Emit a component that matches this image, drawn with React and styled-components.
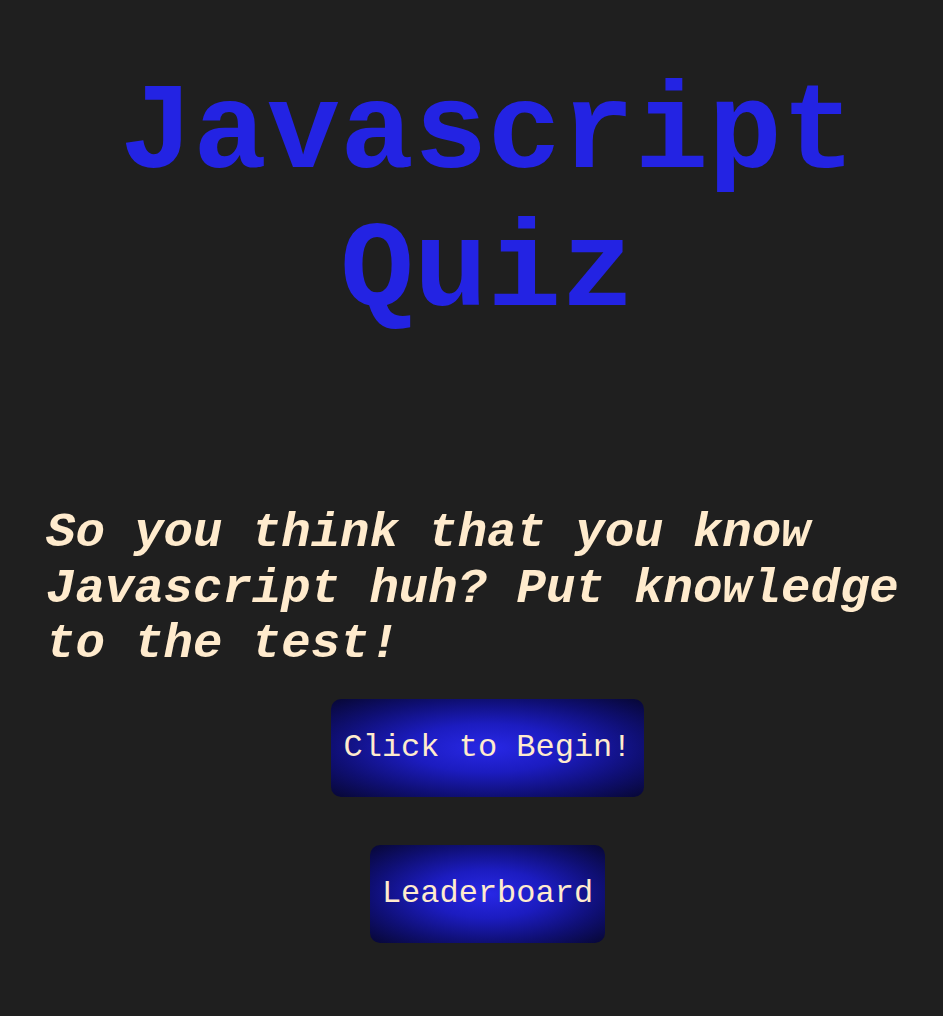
import React from "react";
import styled, { createGlobalStyle } from "styled-components";

const MONO = `"Courier New", "Nimbus Mono PS", "Nimbus Mono L", FreeMono, "Liberation Mono", monospace`;

const GlobalStyle = createGlobalStyle`
  html, body {
    margin: 0;
    padding: 0;
    background: #1f1f1f;
  }
  body {
    font-family: ${MONO};
  }
`;

const Page = styled.main`
  min-height: 1016px;
  box-sizing: border-box;
  padding: 66px 14px 40px 46px;
  display: flex;
  flex-direction: column;
`;

const Title = styled.h1`
  margin: 0;
  font-family: ${MONO};
  font-weight: 700;
  font-size: 122.6px;
  line-height: 138px;
  color: #2323e3;
  text-align: center;
`;

const Tagline = styled.p`
  margin: 164px 0 0;
  font-family: ${MONO};
  font-weight: 700;
  font-style: italic;
  font-size: 49px;
  line-height: 55.5px;
  color: #ffebcd;
`;

const ButtonColumn = styled.div`
  margin-top: 26px;
  display: flex;
  flex-direction: column;
  align-items: center;
  gap: 48px;
`;

const GlowButton = styled.button`
  font-family: ${MONO};
  font-size: 32px;
  line-height: 36px;
  color: #ffebcd;
  padding: 31px 12px;
  border: none;
  border-radius: 10px;
  cursor: pointer;
  background: radial-gradient(
    ellipse at center,
    #2828e6 0%,
    #1c1cc0 35%,
    #0f0f74 70%,
    #070734 100%
  );
`;

export default function App() {
  return (
    <>
      <GlobalStyle />
      <Page>
        <Title>Javascript Quiz</Title>
        <Tagline>
          So you think that you know Javascript huh? Put knowledge to the test!
        </Tagline>
        <ButtonColumn>
          <GlowButton>Click to Begin!</GlowButton>
          <GlowButton>Leaderboard</GlowButton>
        </ButtonColumn>
      </Page>
    </>
  );
}
